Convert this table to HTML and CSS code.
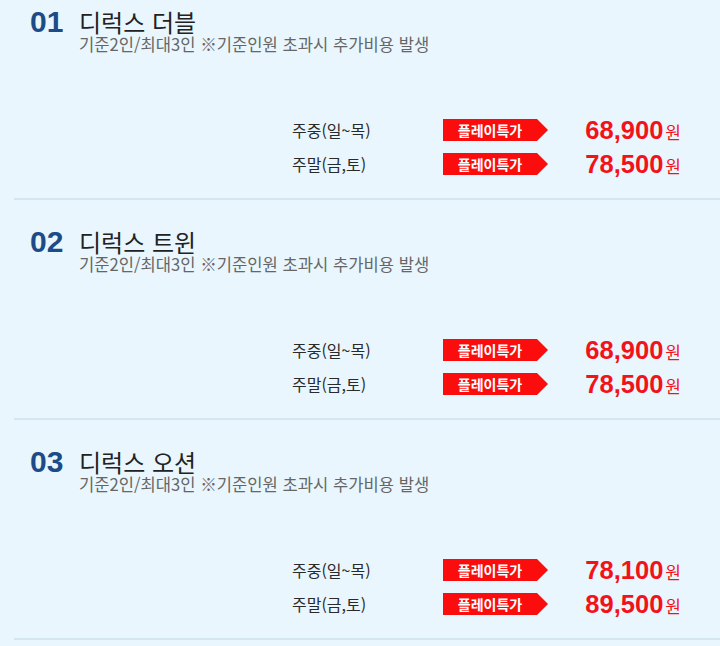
FILE: index.html
```html
<!DOCTYPE html>
<html lang="ko">
<head>
<meta charset="utf-8">
<link rel="stylesheet" href="styles.css">
</head>
<body>
<div class="list">
  <section class="room">
    <div class="room-head">
      <span class="num">01</span>
      <div class="info">
        <h2 class="title">디럭스 더블</h2>
        <p class="desc">기준2인/최대3인 ※기준인원 초과시 추가비용 발생</p>
      </div>
    </div>
    <div class="rates">
      <div class="rate"><span class="day">주중(일~목)</span><span class="badge">플레이특가</span><span class="price"><b class="amount">68,900</b><span class="won">원</span></span></div>
      <div class="rate"><span class="day">주말(금,토)</span><span class="badge">플레이특가</span><span class="price"><b class="amount">78,500</b><span class="won">원</span></span></div>
    </div>
  </section>
  <section class="room">
    <div class="room-head">
      <span class="num">02</span>
      <div class="info">
        <h2 class="title">디럭스 트윈</h2>
        <p class="desc">기준2인/최대3인 ※기준인원 초과시 추가비용 발생</p>
      </div>
    </div>
    <div class="rates">
      <div class="rate"><span class="day">주중(일~목)</span><span class="badge">플레이특가</span><span class="price"><b class="amount">68,900</b><span class="won">원</span></span></div>
      <div class="rate"><span class="day">주말(금,토)</span><span class="badge">플레이특가</span><span class="price"><b class="amount">78,500</b><span class="won">원</span></span></div>
    </div>
  </section>
  <section class="room">
    <div class="room-head">
      <span class="num">03</span>
      <div class="info">
        <h2 class="title">디럭스 오션</h2>
        <p class="desc">기준2인/최대3인 ※기준인원 초과시 추가비용 발생</p>
      </div>
    </div>
    <div class="rates">
      <div class="rate"><span class="day">주중(일~목)</span><span class="badge">플레이특가</span><span class="price"><b class="amount">78,100</b><span class="won">원</span></span></div>
      <div class="rate"><span class="day">주말(금,토)</span><span class="badge">플레이특가</span><span class="price"><b class="amount">89,500</b><span class="won">원</span></span></div>
    </div>
  </section>
</div>
</body>
</html>
```

FILE: styles.css
```css
html, body {
  margin: 0;
  padding: 0;
  background: #e9f6fd;
}
body {
  font-family: "Noto Sans CJK KR", "Noto Sans", sans-serif;
  color: #222;
}
.list {
  padding-left: 14px;
}
.room {
  height: 218px;
  border-bottom: 2px solid #d4e6ef;
  display: flex;
  flex-direction: column;
  padding-left: 16px;
}
.room:first-child {
  height: 198px;
}
.room-head {
  display: flex;
  align-items: baseline;
  padding-top: 29px;
}
.room:first-child .room-head {
  padding-top: 9px;
}
.num {
  width: 49px;
  flex: none;
  font-family: "Liberation Sans", Arial, sans-serif;
  font-weight: 700;
  font-size: 30px;
  line-height: 26px;
  color: #1c4b88;
}
.info {
  display: flex;
  flex-direction: column;
}
.title {
  margin: 0;
  font-size: 24px;
  font-weight: 400;
  line-height: 26px;
  color: #222;
}
.desc {
  margin: 1px 0 0;
  font-size: 16.6px;
  line-height: 17px;
  color: #666;
}
.rates {
  margin-top: auto;
  padding-bottom: 17px;
  padding-left: 262px;
}
.rate {
  display: flex;
  align-items: center;
  height: 34px;
}
.day {
  width: 151px;
  flex: none;
  font-size: 16px;
  line-height: 20px;
  color: #2a2a2a;
}
.badge {
  width: 105px;
  height: 22px;
  flex: none;
  box-sizing: border-box;
  padding-right: 11px;
  background: #fb0d0d;
  clip-path: polygon(0 0, 94px 0, 105px 50%, 94px 100%, 0 100%);
  color: #fff;
  font-size: 14px;
  font-weight: 700;
  line-height: 22px;
  text-align: center;
}
.price {
  margin-left: auto;
  margin-right: 39px;
  display: flex;
  align-items: baseline;
  color: #f2131a;
}
.amount {
  font-family: "Liberation Sans", Arial, sans-serif;
  font-weight: 700;
  font-size: 25.5px;
  line-height: 25px;
}
.won {
  margin-left: 2px;
  font-size: 17px;
  line-height: 20px;
}
```
